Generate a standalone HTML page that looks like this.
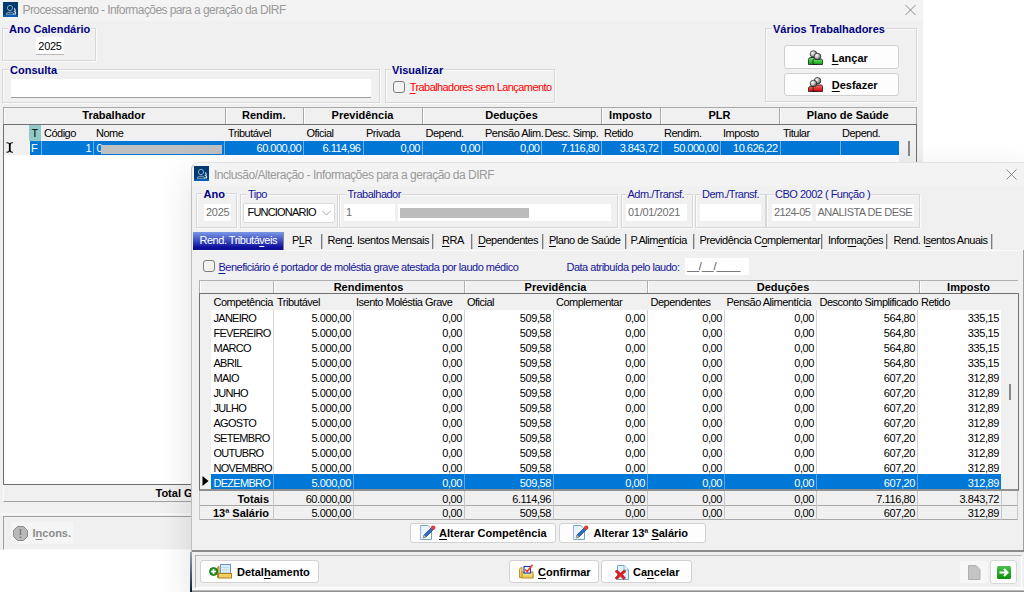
<!DOCTYPE html><html><head><meta charset="utf-8"><style>
html,body{margin:0;padding:0;width:1024px;height:592px;overflow:hidden;background:#fff;position:relative;font-family:"Liberation Sans",sans-serif;}
.a{position:absolute;white-space:nowrap;}
u{text-decoration:underline;text-underline-offset:1.5px;}
</style></head><body>
<div class="a" style="left:0px;top:0px;width:923px;height:550px;background:#f0f0f0;"></div>
<div class="a" style="left:0px;top:0px;width:923px;height:21px;background:#f3f3f3;"></div>
<div class="a" style="left:3px;top:2px;width:15px;height:15px;background:#0d3b66;"></div>
<div class="a" style="left:22.5px;top:3.83px;font-size:12px;font-weight:400;color:#9a9a9a;letter-spacing:-0.58px;line-height:12px;">Processamento - Informações para a geração da DIRF</div>
<svg class="a" style="left:904px;top:4px" width="13" height="12"><path d="M1.5 1 L11.5 11 M11.5 1 L1.5 11" stroke="#8a8a8a" stroke-width="1"/></svg>
<div class="a" style="left:2px;top:28px;width:94px;height:33px;box-sizing:border-box;border:1px solid #d8d8d8;box-shadow:inset 1px 1px 0 #fafafa, 1px 1px 0 #fafafa;"></div>
<div class="a" style="left:9px;top:23.86px;font-size:11px;font-weight:700;color:#000080;letter-spacing:0px;line-height:11px;background:#f0f0f0;padding:0 1px;margin-left:-1px;">Ano Calendário</div>
<div class="a" style="left:36px;top:37px;width:28px;height:18px;background:#fff;border-bottom:1px solid #b8b8b8;box-sizing:border-box;"></div>
<div class="a" style="left:30.0px;width:40px;text-align:center;top:40.86px;font-size:11px;font-weight:400;color:#000;letter-spacing:-0.3px;line-height:11px;">2025</div>
<div class="a" style="left:2px;top:69px;width:378px;height:34px;box-sizing:border-box;border:1px solid #d8d8d8;box-shadow:inset 1px 1px 0 #fafafa, 1px 1px 0 #fafafa;"></div>
<div class="a" style="left:10px;top:64.86px;font-size:11px;font-weight:700;color:#000080;letter-spacing:0px;line-height:11px;background:#f0f0f0;padding:0 1px;margin-left:-1px;">Consulta</div>
<div class="a" style="left:11px;top:79px;width:360px;height:19px;background:#fff;border-bottom:1px solid #a0a0a0;box-sizing:border-box;"></div>
<div class="a" style="left:385px;top:69px;width:170px;height:34px;box-sizing:border-box;border:1px solid #d8d8d8;box-shadow:inset 1px 1px 0 #fafafa, 1px 1px 0 #fafafa;"></div>
<div class="a" style="left:392px;top:64.86px;font-size:11px;font-weight:700;color:#000080;letter-spacing:0px;line-height:11px;background:#f0f0f0;padding:0 1px;margin-left:-1px;">Visualizar</div>
<div class="a" style="left:393px;top:81px;width:12px;height:12px;background:#f3f3f3;border:1px solid #7c7c7c;border-radius:3px;box-sizing:border-box;"></div>
<div class="a" style="left:409.75px;top:82.46px;font-size:11px;font-weight:400;color:#ff0000;letter-spacing:-0.58px;line-height:11px;"><u>T</u>rabalhadores sem Lançamento</div>
<div class="a" style="left:765px;top:28px;width:152px;height:74px;box-sizing:border-box;border:1px solid #d8d8d8;box-shadow:inset 1px 1px 0 #fafafa, 1px 1px 0 #fafafa;"></div>
<div class="a" style="left:773px;top:23.86px;font-size:11px;font-weight:700;color:#000080;letter-spacing:0px;line-height:11px;background:#f0f0f0;padding:0 1px;margin-left:-1px;">Vários Trabalhadores</div>
<div class="a" style="left:784px;top:45px;width:115px;height:24px;background:#fdfdfd;border:1px solid #d0d0d0;border-radius:3px;box-sizing:border-box;"></div>
<div class="a" style="left:784px;top:73px;width:115px;height:23px;background:#fdfdfd;border:1px solid #d0d0d0;border-radius:3px;box-sizing:border-box;"></div>
<svg class="a" style="left:808px;top:50px" width="15" height="15" viewBox="0 0 15 15"><defs><radialGradient id="hd" cx="0.35" cy="0.35" r="0.7"><stop offset="0" stop-color="#ffffff"/><stop offset="0.5" stop-color="#b8b8b8"/><stop offset="1" stop-color="#404040"/></radialGradient>
<linearGradient id="gb" x1="0" y1="0" x2="0" y2="1"><stop offset="0" stop-color="#6ee86e"/><stop offset="1" stop-color="#0a9a0a"/></linearGradient>
<linearGradient id="rb" x1="0" y1="0" x2="0" y2="1"><stop offset="0" stop-color="#ff6a6a"/><stop offset="1" stop-color="#c80000"/></linearGradient></defs><path d="M0.5 9.5 Q0.5 7.5 3 7.5 H9 V14.5 H0.5 Z" fill="url(#gb)" stroke="#1a1a1a" stroke-width="0.8"/><path d="M5 10.5 Q5 9 7 9 H13 Q14.5 9 14.5 10.5 V14.5 H5 Z" fill="url(#gb)" stroke="#1a1a1a" stroke-width="0.8"/><circle cx="5.5" cy="4" r="3.3" fill="url(#hd)" stroke="#222" stroke-width="0.7"/><circle cx="9.5" cy="6.5" r="3.3" fill="url(#hd)" stroke="#222" stroke-width="0.7"/></svg>
<svg class="a" style="left:808px;top:77px" width="15" height="15" viewBox="0 0 15 15"><path d="M0.5 11 Q0.5 9.5 2.5 9.5 H9 V14.5 H0.5 Z" fill="url(#rb)" stroke="#1a1a1a" stroke-width="0.8"/><path d="M5 9.5 Q5 8 7 8 H13 Q14.5 8 14.5 9.5 V14.5 H5 Z" fill="url(#rb)" stroke="#1a1a1a" stroke-width="0.8"/><circle cx="9.5" cy="3.8" r="3.3" fill="url(#hd)" stroke="#222" stroke-width="0.7"/><circle cx="5.5" cy="6.5" r="3.3" fill="url(#hd)" stroke="#222" stroke-width="0.7"/></svg>
<div class="a" style="left:831.75px;top:52.86px;font-size:11px;font-weight:700;color:#000;letter-spacing:0px;line-height:11px;"><u>L</u>ançar</div>
<div class="a" style="left:831.75px;top:79.86px;font-size:11px;font-weight:700;color:#000;letter-spacing:0px;line-height:11px;"><u>D</u>esfazer</div>
<div class="a" style="left:3px;top:107px;width:913.5px;height:17px;background:#f0f0f0;border-top:1px solid #a8a8a8;box-sizing:border-box;"></div>
<div class="a" style="left:3px;top:107px;width:1px;height:17px;background:#a8a8a8;"></div>
<div class="a" style="left:4px;top:108px;width:1px;height:16px;background:#fff;"></div>
<div class="a" style="left:13.75px;width:200px;text-align:center;top:110.36px;font-size:11px;font-weight:700;color:#000;letter-spacing:0px;line-height:11px;">Trabalhador</div>
<div class="a" style="left:224.5px;top:107px;width:1.0px;height:17px;background:#a8a8a8;"></div>
<div class="a" style="left:225.5px;top:108px;width:1.0px;height:16px;background:#fff;"></div>
<div class="a" style="left:163.75px;width:200px;text-align:center;top:110.36px;font-size:11px;font-weight:700;color:#000;letter-spacing:0px;line-height:11px;">Rendim.</div>
<div class="a" style="left:303px;top:107px;width:1px;height:17px;background:#a8a8a8;"></div>
<div class="a" style="left:304px;top:108px;width:1px;height:16px;background:#fff;"></div>
<div class="a" style="left:262.5px;width:200px;text-align:center;top:110.36px;font-size:11px;font-weight:700;color:#000;letter-spacing:0px;line-height:11px;">Previdência</div>
<div class="a" style="left:422px;top:107px;width:1px;height:17px;background:#a8a8a8;"></div>
<div class="a" style="left:423px;top:108px;width:1px;height:16px;background:#fff;"></div>
<div class="a" style="left:411.5px;width:200px;text-align:center;top:110.36px;font-size:11px;font-weight:700;color:#000;letter-spacing:0px;line-height:11px;">Deduções</div>
<div class="a" style="left:601px;top:107px;width:1px;height:17px;background:#a8a8a8;"></div>
<div class="a" style="left:602px;top:108px;width:1px;height:16px;background:#fff;"></div>
<div class="a" style="left:530.5px;width:200px;text-align:center;top:110.36px;font-size:11px;font-weight:700;color:#000;letter-spacing:0px;line-height:11px;">Imposto</div>
<div class="a" style="left:660px;top:107px;width:1px;height:17px;background:#a8a8a8;"></div>
<div class="a" style="left:661px;top:108px;width:1px;height:16px;background:#fff;"></div>
<div class="a" style="left:619.5px;width:200px;text-align:center;top:110.36px;font-size:11px;font-weight:700;color:#000;letter-spacing:0px;line-height:11px;">PLR</div>
<div class="a" style="left:779px;top:107px;width:1px;height:17px;background:#a8a8a8;"></div>
<div class="a" style="left:780px;top:108px;width:1px;height:16px;background:#fff;"></div>
<div class="a" style="left:747.75px;width:200px;text-align:center;top:110.36px;font-size:11px;font-weight:700;color:#000;letter-spacing:0px;line-height:11px;">Plano de Saúde</div>
<div class="a" style="left:915.5px;top:107px;width:1.0px;height:17px;background:#a8a8a8;"></div>
<div class="a" style="left:3px;top:124px;width:914px;height:361px;background:#fff;border:1px solid #6f6f6f;box-sizing:border-box;"></div>
<div class="a" style="left:4px;top:125px;width:894.5px;height:16px;background:#f0f0f0;"></div>
<div class="a" style="left:898.5px;top:125px;width:17.5px;height:359px;background:#f0f0f0;"></div>
<div class="a" style="left:29px;top:125px;width:12px;height:16px;background:#8fcac6;"></div>
<div class="a" style="left:31.5px;top:127.86px;font-size:11px;font-weight:400;color:#000;letter-spacing:-0.5px;line-height:11px;">T</div>
<div class="a" style="left:44px;top:127.86px;font-size:11px;font-weight:400;color:#000;letter-spacing:-0.5px;line-height:11px;">Código</div>
<div class="a" style="left:96px;top:127.86px;font-size:11px;font-weight:400;color:#000;letter-spacing:-0.5px;line-height:11px;">Nome</div>
<div class="a" style="left:228px;top:127.86px;font-size:11px;font-weight:400;color:#000;letter-spacing:-0.5px;line-height:11px;">Tributável</div>
<div class="a" style="left:306.5px;top:127.86px;font-size:11px;font-weight:400;color:#000;letter-spacing:-0.5px;line-height:11px;">Oficial</div>
<div class="a" style="left:366px;top:127.86px;font-size:11px;font-weight:400;color:#000;letter-spacing:-0.5px;line-height:11px;">Privada</div>
<div class="a" style="left:425.5px;top:127.86px;font-size:11px;font-weight:400;color:#000;letter-spacing:-0.5px;line-height:11px;">Depend.</div>
<div class="a" style="left:485px;top:127.86px;font-size:11px;font-weight:400;color:#000;letter-spacing:-0.5px;line-height:11px;">Pensão Alim.</div>
<div class="a" style="left:544.5px;top:127.86px;font-size:11px;font-weight:400;color:#000;letter-spacing:-0.5px;line-height:11px;">Desc. Simp.</div>
<div class="a" style="left:604px;top:127.86px;font-size:11px;font-weight:400;color:#000;letter-spacing:-0.5px;line-height:11px;">Retido</div>
<div class="a" style="left:664px;top:127.86px;font-size:11px;font-weight:400;color:#000;letter-spacing:-0.5px;line-height:11px;">Rendim.</div>
<div class="a" style="left:723px;top:127.86px;font-size:11px;font-weight:400;color:#000;letter-spacing:-0.5px;line-height:11px;">Imposto</div>
<div class="a" style="left:783px;top:127.86px;font-size:11px;font-weight:400;color:#000;letter-spacing:-0.5px;line-height:11px;">Titular</div>
<div class="a" style="left:842px;top:127.86px;font-size:11px;font-weight:400;color:#000;letter-spacing:-0.5px;line-height:11px;">Depend.</div>
<div class="a" style="left:29.5px;top:141px;width:869.0px;height:14px;background:#0078d7;"></div>
<div class="a" style="left:41px;top:141px;width:1px;height:14px;background:#6fb1e8;"></div>
<div class="a" style="left:93px;top:141px;width:1px;height:14px;background:#6fb1e8;"></div>
<div class="a" style="left:224px;top:141px;width:1px;height:14px;background:#6fb1e8;"></div>
<div class="a" style="left:303px;top:141px;width:1px;height:14px;background:#6fb1e8;"></div>
<div class="a" style="left:362.5px;top:141px;width:1.0px;height:14px;background:#6fb1e8;"></div>
<div class="a" style="left:422px;top:141px;width:1px;height:14px;background:#6fb1e8;"></div>
<div class="a" style="left:481.5px;top:141px;width:1.0px;height:14px;background:#6fb1e8;"></div>
<div class="a" style="left:541px;top:141px;width:1px;height:14px;background:#6fb1e8;"></div>
<div class="a" style="left:600.5px;top:141px;width:1.0px;height:14px;background:#6fb1e8;"></div>
<div class="a" style="left:660.5px;top:141px;width:1.0px;height:14px;background:#6fb1e8;"></div>
<div class="a" style="left:719.5px;top:141px;width:1.0px;height:14px;background:#6fb1e8;"></div>
<div class="a" style="left:779.5px;top:141px;width:1.0px;height:14px;background:#6fb1e8;"></div>
<div class="a" style="left:839.5px;top:141px;width:1.0px;height:14px;background:#6fb1e8;"></div>
<div class="a" style="left:31px;top:143.16px;font-size:11px;font-weight:400;color:#fff;letter-spacing:-0.5px;line-height:11px;">F</div>
<div class="a" style="left:51px;width:40px;text-align:right;top:143.16px;font-size:11px;font-weight:400;color:#fff;letter-spacing:-0.5px;line-height:11px;">1</div>
<div class="a" style="left:96.5px;top:143.16px;font-size:11px;font-weight:400;color:#fff;letter-spacing:-0.5px;line-height:11px;">0</div>
<div class="a" style="left:100.5px;top:144.5px;width:121.5px;height:9.0px;background:#c0c0c0;"></div>
<div class="a" style="left:221px;width:80px;text-align:right;top:143.16px;font-size:11px;font-weight:400;color:#fff;letter-spacing:-0.5px;line-height:11px;">60.000,00</div>
<div class="a" style="left:280.5px;width:80px;text-align:right;top:143.16px;font-size:11px;font-weight:400;color:#fff;letter-spacing:-0.5px;line-height:11px;">6.114,96</div>
<div class="a" style="left:340px;width:80px;text-align:right;top:143.16px;font-size:11px;font-weight:400;color:#fff;letter-spacing:-0.5px;line-height:11px;">0,00</div>
<div class="a" style="left:400px;width:80px;text-align:right;top:143.16px;font-size:11px;font-weight:400;color:#fff;letter-spacing:-0.5px;line-height:11px;">0,00</div>
<div class="a" style="left:459.5px;width:80px;text-align:right;top:143.16px;font-size:11px;font-weight:400;color:#fff;letter-spacing:-0.5px;line-height:11px;">0,00</div>
<div class="a" style="left:519px;width:80px;text-align:right;top:143.16px;font-size:11px;font-weight:400;color:#fff;letter-spacing:-0.5px;line-height:11px;">7.116,80</div>
<div class="a" style="left:578.5px;width:80px;text-align:right;top:143.16px;font-size:11px;font-weight:400;color:#fff;letter-spacing:-0.5px;line-height:11px;">3.843,72</div>
<div class="a" style="left:638px;width:80px;text-align:right;top:143.16px;font-size:11px;font-weight:400;color:#fff;letter-spacing:-0.5px;line-height:11px;">50.000,00</div>
<div class="a" style="left:697.5px;width:80px;text-align:right;top:143.16px;font-size:11px;font-weight:400;color:#fff;letter-spacing:-0.5px;line-height:11px;">10.626,22</div>
<div class="a" style="left:4px;top:141px;width:25px;height:14px;background:#f0f0f0;"></div>
<svg class="a" style="left:4px;top:141px" width="11" height="13"><path d="M2.5 1.8 Q5 1.5 5.8 3.5 Q6.5 1.5 8.8 1.8 M2.5 11.2 Q5 11.5 5.8 9.5 Q6.5 11.5 8.8 11.2" stroke="#000" stroke-width="1.2" fill="none"/><path d="M5.8 3 V10" stroke="#000" stroke-width="1.8"/></svg>
<div class="a" style="left:907.5px;top:141px;width:2.0px;height:15px;background:#888;"></div>
<div class="a" style="left:3px;top:485px;width:914px;height:17px;background:#f0f0f0;border-bottom:1px solid #a0a0a0;border-left:1px solid #fafafa;box-sizing:border-box;"></div>
<div class="a" style="left:155.5px;top:487.86px;font-size:11px;font-weight:700;color:#000;letter-spacing:0px;line-height:11px;">Total Geral</div>
<div class="a" style="left:0px;top:513px;width:923px;height:2px;background:#f8f8f8;"></div>
<div class="a" style="left:3px;top:516px;width:920px;height:34px;border-top:1px solid #a0a0a0;border-left:1px solid #a0a0a0;border-bottom:1px solid #fafafa;box-sizing:border-box;"></div>
<div class="a" style="left:10.5px;top:522px;width:62.5px;height:21.5px;background:#f5f5f5;border-radius:3px;"></div>
<svg class="a" style="left:13px;top:526px" width="15" height="15" viewBox="0 0 15 15"><path d="M4.5 0.5 H10.5 L14.5 4.5 V10.5 L10.5 14.5 H4.5 L0.5 10.5 V4.5 Z" fill="#b8b8b8" stroke="#8a8a8a" stroke-width="1"/><path d="M7.5 3 V9 M7.5 10.5 V12" stroke="#7a7a7a" stroke-width="1.5"/></svg>
<div class="a" style="left:32.5px;top:527.86px;font-size:11px;font-weight:700;color:#8c8c8c;letter-spacing:0px;line-height:11px;">I<u>n</u>cons.</div>
<div class="a" style="left:191px;top:162px;width:839px;height:438px;background:#f0f0f0;border:1px solid #c0c0c0;border-top-color:#e4e4e4;border-radius:8px 8px 0 0;box-sizing:border-box;box-shadow:0 12px 36px rgba(0,0,0,0.12);"></div>
<div class="a" style="left:192px;top:163px;width:837px;height:23px;background:#f3f3f3;border-radius:7px 7px 0 0;"></div>
<svg class="a" style="left:194px;top:166px" width="15" height="15"><rect width="15" height="15" fill="#003a70"/><rect y="13" width="15" height="2" fill="#0a5db5"/><path d="M11 6.5 C12.5 7 12.5 9 11.5 9.5 C12.5 10 13 11 12.5 12 H10" fill="none" stroke="#d8e4f0" stroke-width="1.1"/><circle cx="7" cy="6" r="2.6" fill="none" stroke="#9fb4c8" stroke-width="0.9"/><path d="M3 12.2 C3.5 9.5 10.5 9.5 11 12.2 Z" fill="none" stroke="#9fb4c8" stroke-width="0.9"/></svg>
<svg class="a" style="left:3px;top:2px" width="15" height="15"><rect width="15" height="15" fill="#003a70"/><rect y="13" width="15" height="2" fill="#0a5db5"/><path d="M11 6.5 C12.5 7 12.5 9 11.5 9.5 C12.5 10 13 11 12.5 12 H10" fill="none" stroke="#d8e4f0" stroke-width="1.1"/><circle cx="7" cy="6" r="2.6" fill="none" stroke="#9fb4c8" stroke-width="0.9"/><path d="M3 12.2 C3.5 9.5 10.5 9.5 11 12.2 Z" fill="none" stroke="#9fb4c8" stroke-width="0.9"/></svg>
<div class="a" style="left:214px;top:169.33px;font-size:12px;font-weight:400;color:#9a9a9a;letter-spacing:-0.5px;line-height:12px;">Inclusão/Alteração - Informações para a geração da DIRF</div>
<svg class="a" style="left:1005px;top:168px" width="13" height="13"><path d="M1.5 1.5 L11.5 11.5 M11.5 1.5 L1.5 11.5" stroke="#8a8a8a" stroke-width="1"/></svg>
<div class="a" style="left:196px;top:193px;width:41px;height:35px;box-sizing:border-box;border:1px solid #d8d8d8;box-shadow:inset 1px 1px 0 #fafafa, 1px 1px 0 #fafafa;"></div>
<div class="a" style="left:203.5px;top:188.86px;font-size:11px;font-weight:700;color:#000080;letter-spacing:0px;line-height:11px;background:#f0f0f0;padding:0 1px;margin-left:-1px;">Ano</div>
<div class="a" style="left:204px;top:204px;width:27px;height:17px;background:#fff;"></div>
<div class="a" style="left:206px;top:207.36px;font-size:11px;font-weight:400;color:#6d6d6d;letter-spacing:-0.3px;line-height:11px;">2025</div>
<div class="a" style="left:240px;top:194px;width:98px;height:34px;box-sizing:border-box;border:1px solid #d8d8d8;box-shadow:inset 1px 1px 0 #fafafa, 1px 1px 0 #fafafa;"></div>
<div class="a" style="left:248px;top:188.86px;font-size:11px;font-weight:400;color:#16169a;letter-spacing:-0.5px;line-height:11px;background:#f0f0f0;padding:0 1px;margin-left:-1px;">Tipo</div>
<div class="a" style="left:243px;top:203px;width:92px;height:20px;background:#fff;border:1px solid #dadada;border-radius:2px;box-sizing:border-box;"></div>
<div class="a" style="left:247.5px;top:207.36px;font-size:11px;font-weight:400;color:#000;letter-spacing:-0.8px;line-height:11px;">FUNCIONARIO</div>
<svg class="a" style="left:322px;top:210px" width="9" height="7"><path d="M0.5 1 L4.5 5 L8.5 1" stroke="#a8a8a8" stroke-width="1" fill="none"/></svg>
<div class="a" style="left:339px;top:194px;width:279px;height:34px;box-sizing:border-box;border:1px solid #d8d8d8;box-shadow:inset 1px 1px 0 #fafafa, 1px 1px 0 #fafafa;"></div>
<div class="a" style="left:347.5px;top:188.86px;font-size:11px;font-weight:400;color:#16169a;letter-spacing:-0.5px;line-height:11px;background:#f0f0f0;padding:0 1px;margin-left:-1px;">Trabalhador</div>
<div class="a" style="left:344px;top:204px;width:51px;height:17px;background:#fff;"></div>
<div class="a" style="left:346px;top:207.36px;font-size:11px;font-weight:400;color:#6d6d6d;letter-spacing:-0.5px;line-height:11px;">1</div>
<div class="a" style="left:398px;top:204px;width:213px;height:17px;background:#fff;"></div>
<div class="a" style="left:400px;top:208px;width:129px;height:10px;background:#bcbcbc;"></div>
<div class="a" style="left:621px;top:194px;width:72px;height:34px;box-sizing:border-box;border:1px solid #d8d8d8;box-shadow:inset 1px 1px 0 #fafafa, 1px 1px 0 #fafafa;"></div>
<div class="a" style="left:627.5px;top:188.86px;font-size:11px;font-weight:400;color:#16169a;letter-spacing:-0.5px;line-height:11px;background:#f0f0f0;padding:0 1px;margin-left:-1px;">Adm./Transf.</div>
<div class="a" style="left:626px;top:204px;width:61px;height:17px;background:#fff;"></div>
<div class="a" style="left:628px;top:207.36px;font-size:11px;font-weight:400;color:#6d6d6d;letter-spacing:-0.3px;line-height:11px;">01/01/2021</div>
<div class="a" style="left:695px;top:194px;width:71px;height:34px;box-sizing:border-box;border:1px solid #d8d8d8;box-shadow:inset 1px 1px 0 #fafafa, 1px 1px 0 #fafafa;"></div>
<div class="a" style="left:702px;top:188.86px;font-size:11px;font-weight:400;color:#16169a;letter-spacing:-0.5px;line-height:11px;background:#f0f0f0;padding:0 1px;margin-left:-1px;">Dem./Transf.</div>
<div class="a" style="left:700px;top:204px;width:61px;height:17px;background:#fff;"></div>
<div class="a" style="left:766px;top:194px;width:154px;height:34px;box-sizing:border-box;border:1px solid #d8d8d8;box-shadow:inset 1px 1px 0 #fafafa, 1px 1px 0 #fafafa;"></div>
<div class="a" style="left:775px;top:188.86px;font-size:11px;font-weight:400;color:#16169a;letter-spacing:-0.5px;line-height:11px;background:#f0f0f0;padding:0 1px;margin-left:-1px;">CBO 2002 ( Função )</div>
<div class="a" style="left:772px;top:204px;width:40px;height:17px;background:#fff;"></div>
<div class="a" style="left:774px;top:207.36px;font-size:11px;font-weight:400;color:#6d6d6d;letter-spacing:-0.6px;line-height:11px;">2124-05</div>
<div class="a" style="left:816px;top:204px;width:98px;height:17px;background:#fff;"></div>
<div class="a" style="left:817.5px;top:207.36px;font-size:11px;font-weight:400;color:#6d6d6d;letter-spacing:-0.53px;line-height:11px;">ANALISTA DE DESE</div>
<div class="a" style="left:193px;top:232px;width:91px;height:19px;background:linear-gradient(to bottom,#7a98e6 0%,#3d4fc0 45%,#1010a0 80%,#0a0a8a 100%);"></div>
<div class="a" style="left:283px;top:233px;width:1px;height:17px;background:#8a8a8a;"></div>
<div class="a" style="left:199.5px;top:235.36px;font-size:11px;font-weight:400;color:#fff;letter-spacing:-0.48px;line-height:11px;">Rend. Tributá<u>v</u>eis</div>
<div class="a" style="left:292px;top:235.36px;font-size:11px;font-weight:400;color:#000;letter-spacing:-0.5px;line-height:11px;">P<u>L</u>R</div>
<div class="a" style="left:320.5px;top:234px;width:1.0px;height:15px;background:#7a7a7a;"></div>
<div class="a" style="left:321.5px;top:234px;width:1.0px;height:15px;background:#c8c8c8;"></div>
<div class="a" style="left:327.5px;top:235.36px;font-size:11px;font-weight:400;color:#000;letter-spacing:-0.5px;line-height:11px;">Ren<u>d</u>. Isentos Mensais</div>
<div class="a" style="left:432px;top:234px;width:1px;height:15px;background:#7a7a7a;"></div>
<div class="a" style="left:433px;top:234px;width:1px;height:15px;background:#c8c8c8;"></div>
<div class="a" style="left:442px;top:235.36px;font-size:11px;font-weight:400;color:#000;letter-spacing:-0.5px;line-height:11px;"><u>R</u>RA</div>
<div class="a" style="left:471px;top:234px;width:1px;height:15px;background:#7a7a7a;"></div>
<div class="a" style="left:472px;top:234px;width:1px;height:15px;background:#c8c8c8;"></div>
<div class="a" style="left:478px;top:235.36px;font-size:11px;font-weight:400;color:#000;letter-spacing:-0.5px;line-height:11px;"><u>D</u>ependentes</div>
<div class="a" style="left:542px;top:234px;width:1px;height:15px;background:#7a7a7a;"></div>
<div class="a" style="left:543px;top:234px;width:1px;height:15px;background:#c8c8c8;"></div>
<div class="a" style="left:549px;top:235.36px;font-size:11px;font-weight:400;color:#000;letter-spacing:-0.5px;line-height:11px;"><u>P</u>lano de Saúde</div>
<div class="a" style="left:624.5px;top:234px;width:1.0px;height:15px;background:#7a7a7a;"></div>
<div class="a" style="left:625.5px;top:234px;width:1.0px;height:15px;background:#c8c8c8;"></div>
<div class="a" style="left:630.5px;top:235.36px;font-size:11px;font-weight:400;color:#000;letter-spacing:-0.5px;line-height:11px;">P.Alim<u>e</u>ntícia</div>
<div class="a" style="left:692.5px;top:234px;width:1.0px;height:15px;background:#7a7a7a;"></div>
<div class="a" style="left:693.5px;top:234px;width:1.0px;height:15px;background:#c8c8c8;"></div>
<div class="a" style="left:699.5px;top:235.36px;font-size:11px;font-weight:400;color:#000;letter-spacing:-0.5px;line-height:11px;">Previdência C<u>o</u>mplementar</div>
<div class="a" style="left:821px;top:234px;width:1px;height:15px;background:#7a7a7a;"></div>
<div class="a" style="left:822px;top:234px;width:1px;height:15px;background:#c8c8c8;"></div>
<div class="a" style="left:828px;top:235.36px;font-size:11px;font-weight:400;color:#000;letter-spacing:-0.5px;line-height:11px;">Infor<u>m</u>ações</div>
<div class="a" style="left:886px;top:234px;width:1px;height:15px;background:#7a7a7a;"></div>
<div class="a" style="left:887px;top:234px;width:1px;height:15px;background:#c8c8c8;"></div>
<div class="a" style="left:893.5px;top:235.36px;font-size:11px;font-weight:400;color:#000;letter-spacing:-0.5px;line-height:11px;">Rend. I<u>s</u>entos Anuais</div>
<div class="a" style="left:991px;top:234px;width:1px;height:15px;background:#7a7a7a;"></div>
<div class="a" style="left:992px;top:234px;width:1px;height:15px;background:#c8c8c8;"></div>
<div class="a" style="left:193px;top:250px;width:831px;height:1px;background:#fafafa;"></div>
<div class="a" style="left:1023px;top:250px;width:1px;height:300px;background:#a0a0a0;"></div>
<div class="a" style="left:203px;top:260px;width:12px;height:12px;background:#f3f3f3;border:1px solid #7c7c7c;border-radius:3px;box-sizing:border-box;"></div>
<div class="a" style="left:218.5px;top:261.86px;font-size:11px;font-weight:400;color:#16169a;letter-spacing:-0.5px;line-height:11px;"><u>B</u>eneficiário é portador de moléstia grave atestada por laudo médico</div>
<div class="a" style="left:566.5px;top:261.86px;font-size:11px;font-weight:400;color:#16169a;letter-spacing:-0.5px;line-height:11px;">Data atribuída pelo laudo:</div>
<div class="a" style="left:685px;top:258px;width:64px;height:17px;background:#fff;"></div>
<div class="a" style="left:687px;top:261.36px;font-size:11px;font-weight:400;color:#555;letter-spacing:-0.2px;line-height:11px;">__/__/____</div>
<div class="a" style="left:199px;top:280px;width:819px;height:13px;background:#f0f0f0;border-top:1px solid #b0b0b0;box-sizing:border-box;"></div>
<div class="a" style="left:199px;top:280px;width:1px;height:13px;background:#b0b0b0;"></div>
<div class="a" style="left:200px;top:281px;width:1px;height:12px;background:#fff;"></div>
<div class="a" style="left:273px;top:280px;width:1px;height:13px;background:#b0b0b0;"></div>
<div class="a" style="left:274px;top:281px;width:1px;height:12px;background:#fff;"></div>
<div class="a" style="left:268.5px;width:200px;text-align:center;top:282.36px;font-size:11px;font-weight:700;color:#000;letter-spacing:0px;line-height:11px;">Rendimentos</div>
<div class="a" style="left:464px;top:280px;width:1px;height:13px;background:#b0b0b0;"></div>
<div class="a" style="left:465px;top:281px;width:1px;height:12px;background:#fff;"></div>
<div class="a" style="left:455.5px;width:200px;text-align:center;top:282.36px;font-size:11px;font-weight:700;color:#000;letter-spacing:0px;line-height:11px;">Previdência</div>
<div class="a" style="left:647px;top:280px;width:1px;height:13px;background:#b0b0b0;"></div>
<div class="a" style="left:648px;top:281px;width:1px;height:12px;background:#fff;"></div>
<div class="a" style="left:683.0px;width:200px;text-align:center;top:282.36px;font-size:11px;font-weight:700;color:#000;letter-spacing:0px;line-height:11px;">Deduções</div>
<div class="a" style="left:919px;top:280px;width:1px;height:13px;background:#b0b0b0;"></div>
<div class="a" style="left:920px;top:281px;width:1px;height:12px;background:#fff;"></div>
<div class="a" style="left:868.5px;width:200px;text-align:center;top:282.36px;font-size:11px;font-weight:700;color:#000;letter-spacing:0px;line-height:11px;">Imposto</div>
<div class="a" style="left:199px;top:293px;width:820px;height:198px;background:#fff;border:1px solid #707070;border-bottom:2px solid #909090;box-sizing:border-box;"></div>
<div class="a" style="left:200px;top:294px;width:818px;height:16px;background:#f0f0f0;"></div>
<div class="a" style="left:200px;top:310px;width:11px;height:179px;background:#f0f0f0;"></div>
<div class="a" style="left:1001px;top:310px;width:17px;height:179px;background:#f0f0f0;"></div>
<div class="a" style="left:1009px;top:384px;width:2px;height:16px;background:#888;"></div>
<div class="a" style="left:213.5px;top:296.86px;font-size:11px;font-weight:400;color:#000;letter-spacing:-0.5px;line-height:11px;">Competência</div>
<div class="a" style="left:277px;top:296.86px;font-size:11px;font-weight:400;color:#000;letter-spacing:-0.5px;line-height:11px;">Tributável</div>
<div class="a" style="left:356px;top:296.86px;font-size:11px;font-weight:400;color:#000;letter-spacing:-0.5px;line-height:11px;">Isento Moléstia Grave</div>
<div class="a" style="left:467px;top:296.86px;font-size:11px;font-weight:400;color:#000;letter-spacing:-0.5px;line-height:11px;">Oficial</div>
<div class="a" style="left:556px;top:296.86px;font-size:11px;font-weight:400;color:#000;letter-spacing:-0.5px;line-height:11px;">Complementar</div>
<div class="a" style="left:650.5px;top:296.86px;font-size:11px;font-weight:400;color:#000;letter-spacing:-0.5px;line-height:11px;">Dependentes</div>
<div class="a" style="left:726.5px;top:296.86px;font-size:11px;font-weight:400;color:#000;letter-spacing:-0.5px;line-height:11px;">Pensão Alimentícia</div>
<div class="a" style="left:819.5px;top:296.86px;font-size:11px;font-weight:400;color:#000;letter-spacing:-0.5px;line-height:11px;">Desconto Simplificado</div>
<div class="a" style="left:921px;top:296.86px;font-size:11px;font-weight:400;color:#000;letter-spacing:-0.5px;line-height:11px;">Retido</div>
<div class="a" style="left:273px;top:310px;width:1px;height:179px;background:#d4d4d4;"></div>
<div class="a" style="left:353px;top:310px;width:1px;height:179px;background:#d4d4d4;"></div>
<div class="a" style="left:464px;top:310px;width:1px;height:179px;background:#d4d4d4;"></div>
<div class="a" style="left:553px;top:310px;width:1px;height:179px;background:#d4d4d4;"></div>
<div class="a" style="left:647px;top:310px;width:1px;height:179px;background:#d4d4d4;"></div>
<div class="a" style="left:724px;top:310px;width:1px;height:179px;background:#d4d4d4;"></div>
<div class="a" style="left:816px;top:310px;width:1px;height:179px;background:#d4d4d4;"></div>
<div class="a" style="left:917px;top:310px;width:1px;height:179px;background:#d4d4d4;"></div>
<div class="a" style="left:213.5px;top:312.56px;font-size:11px;font-weight:400;color:#000;letter-spacing:-0.72px;line-height:11px;">JANEIRO</div>
<div class="a" style="left:261px;width:90px;text-align:right;top:312.56px;font-size:11px;font-weight:400;color:#000;letter-spacing:-0.4px;line-height:11px;">5.000,00</div>
<div class="a" style="left:372px;width:90px;text-align:right;top:312.56px;font-size:11px;font-weight:400;color:#000;letter-spacing:-0.4px;line-height:11px;">0,00</div>
<div class="a" style="left:461px;width:90px;text-align:right;top:312.56px;font-size:11px;font-weight:400;color:#000;letter-spacing:-0.4px;line-height:11px;">509,58</div>
<div class="a" style="left:555px;width:90px;text-align:right;top:312.56px;font-size:11px;font-weight:400;color:#000;letter-spacing:-0.4px;line-height:11px;">0,00</div>
<div class="a" style="left:632px;width:90px;text-align:right;top:312.56px;font-size:11px;font-weight:400;color:#000;letter-spacing:-0.4px;line-height:11px;">0,00</div>
<div class="a" style="left:724px;width:90px;text-align:right;top:312.56px;font-size:11px;font-weight:400;color:#000;letter-spacing:-0.4px;line-height:11px;">0,00</div>
<div class="a" style="left:825px;width:90px;text-align:right;top:312.56px;font-size:11px;font-weight:400;color:#000;letter-spacing:-0.4px;line-height:11px;">564,80</div>
<div class="a" style="left:909px;width:90px;text-align:right;top:312.56px;font-size:11px;font-weight:400;color:#000;letter-spacing:-0.4px;line-height:11px;">335,15</div>
<div class="a" style="left:213.5px;top:327.56px;font-size:11px;font-weight:400;color:#000;letter-spacing:-0.72px;line-height:11px;">FEVEREIRO</div>
<div class="a" style="left:261px;width:90px;text-align:right;top:327.56px;font-size:11px;font-weight:400;color:#000;letter-spacing:-0.4px;line-height:11px;">5.000,00</div>
<div class="a" style="left:372px;width:90px;text-align:right;top:327.56px;font-size:11px;font-weight:400;color:#000;letter-spacing:-0.4px;line-height:11px;">0,00</div>
<div class="a" style="left:461px;width:90px;text-align:right;top:327.56px;font-size:11px;font-weight:400;color:#000;letter-spacing:-0.4px;line-height:11px;">509,58</div>
<div class="a" style="left:555px;width:90px;text-align:right;top:327.56px;font-size:11px;font-weight:400;color:#000;letter-spacing:-0.4px;line-height:11px;">0,00</div>
<div class="a" style="left:632px;width:90px;text-align:right;top:327.56px;font-size:11px;font-weight:400;color:#000;letter-spacing:-0.4px;line-height:11px;">0,00</div>
<div class="a" style="left:724px;width:90px;text-align:right;top:327.56px;font-size:11px;font-weight:400;color:#000;letter-spacing:-0.4px;line-height:11px;">0,00</div>
<div class="a" style="left:825px;width:90px;text-align:right;top:327.56px;font-size:11px;font-weight:400;color:#000;letter-spacing:-0.4px;line-height:11px;">564,80</div>
<div class="a" style="left:909px;width:90px;text-align:right;top:327.56px;font-size:11px;font-weight:400;color:#000;letter-spacing:-0.4px;line-height:11px;">335,15</div>
<div class="a" style="left:213.5px;top:342.56px;font-size:11px;font-weight:400;color:#000;letter-spacing:-0.72px;line-height:11px;">MARCO</div>
<div class="a" style="left:261px;width:90px;text-align:right;top:342.56px;font-size:11px;font-weight:400;color:#000;letter-spacing:-0.4px;line-height:11px;">5.000,00</div>
<div class="a" style="left:372px;width:90px;text-align:right;top:342.56px;font-size:11px;font-weight:400;color:#000;letter-spacing:-0.4px;line-height:11px;">0,00</div>
<div class="a" style="left:461px;width:90px;text-align:right;top:342.56px;font-size:11px;font-weight:400;color:#000;letter-spacing:-0.4px;line-height:11px;">509,58</div>
<div class="a" style="left:555px;width:90px;text-align:right;top:342.56px;font-size:11px;font-weight:400;color:#000;letter-spacing:-0.4px;line-height:11px;">0,00</div>
<div class="a" style="left:632px;width:90px;text-align:right;top:342.56px;font-size:11px;font-weight:400;color:#000;letter-spacing:-0.4px;line-height:11px;">0,00</div>
<div class="a" style="left:724px;width:90px;text-align:right;top:342.56px;font-size:11px;font-weight:400;color:#000;letter-spacing:-0.4px;line-height:11px;">0,00</div>
<div class="a" style="left:825px;width:90px;text-align:right;top:342.56px;font-size:11px;font-weight:400;color:#000;letter-spacing:-0.4px;line-height:11px;">564,80</div>
<div class="a" style="left:909px;width:90px;text-align:right;top:342.56px;font-size:11px;font-weight:400;color:#000;letter-spacing:-0.4px;line-height:11px;">335,15</div>
<div class="a" style="left:213.5px;top:357.56px;font-size:11px;font-weight:400;color:#000;letter-spacing:-0.72px;line-height:11px;">ABRIL</div>
<div class="a" style="left:261px;width:90px;text-align:right;top:357.56px;font-size:11px;font-weight:400;color:#000;letter-spacing:-0.4px;line-height:11px;">5.000,00</div>
<div class="a" style="left:372px;width:90px;text-align:right;top:357.56px;font-size:11px;font-weight:400;color:#000;letter-spacing:-0.4px;line-height:11px;">0,00</div>
<div class="a" style="left:461px;width:90px;text-align:right;top:357.56px;font-size:11px;font-weight:400;color:#000;letter-spacing:-0.4px;line-height:11px;">509,58</div>
<div class="a" style="left:555px;width:90px;text-align:right;top:357.56px;font-size:11px;font-weight:400;color:#000;letter-spacing:-0.4px;line-height:11px;">0,00</div>
<div class="a" style="left:632px;width:90px;text-align:right;top:357.56px;font-size:11px;font-weight:400;color:#000;letter-spacing:-0.4px;line-height:11px;">0,00</div>
<div class="a" style="left:724px;width:90px;text-align:right;top:357.56px;font-size:11px;font-weight:400;color:#000;letter-spacing:-0.4px;line-height:11px;">0,00</div>
<div class="a" style="left:825px;width:90px;text-align:right;top:357.56px;font-size:11px;font-weight:400;color:#000;letter-spacing:-0.4px;line-height:11px;">564,80</div>
<div class="a" style="left:909px;width:90px;text-align:right;top:357.56px;font-size:11px;font-weight:400;color:#000;letter-spacing:-0.4px;line-height:11px;">335,15</div>
<div class="a" style="left:213.5px;top:372.56px;font-size:11px;font-weight:400;color:#000;letter-spacing:-0.72px;line-height:11px;">MAIO</div>
<div class="a" style="left:261px;width:90px;text-align:right;top:372.56px;font-size:11px;font-weight:400;color:#000;letter-spacing:-0.4px;line-height:11px;">5.000,00</div>
<div class="a" style="left:372px;width:90px;text-align:right;top:372.56px;font-size:11px;font-weight:400;color:#000;letter-spacing:-0.4px;line-height:11px;">0,00</div>
<div class="a" style="left:461px;width:90px;text-align:right;top:372.56px;font-size:11px;font-weight:400;color:#000;letter-spacing:-0.4px;line-height:11px;">509,58</div>
<div class="a" style="left:555px;width:90px;text-align:right;top:372.56px;font-size:11px;font-weight:400;color:#000;letter-spacing:-0.4px;line-height:11px;">0,00</div>
<div class="a" style="left:632px;width:90px;text-align:right;top:372.56px;font-size:11px;font-weight:400;color:#000;letter-spacing:-0.4px;line-height:11px;">0,00</div>
<div class="a" style="left:724px;width:90px;text-align:right;top:372.56px;font-size:11px;font-weight:400;color:#000;letter-spacing:-0.4px;line-height:11px;">0,00</div>
<div class="a" style="left:825px;width:90px;text-align:right;top:372.56px;font-size:11px;font-weight:400;color:#000;letter-spacing:-0.4px;line-height:11px;">607,20</div>
<div class="a" style="left:909px;width:90px;text-align:right;top:372.56px;font-size:11px;font-weight:400;color:#000;letter-spacing:-0.4px;line-height:11px;">312,89</div>
<div class="a" style="left:213.5px;top:387.56px;font-size:11px;font-weight:400;color:#000;letter-spacing:-0.72px;line-height:11px;">JUNHO</div>
<div class="a" style="left:261px;width:90px;text-align:right;top:387.56px;font-size:11px;font-weight:400;color:#000;letter-spacing:-0.4px;line-height:11px;">5.000,00</div>
<div class="a" style="left:372px;width:90px;text-align:right;top:387.56px;font-size:11px;font-weight:400;color:#000;letter-spacing:-0.4px;line-height:11px;">0,00</div>
<div class="a" style="left:461px;width:90px;text-align:right;top:387.56px;font-size:11px;font-weight:400;color:#000;letter-spacing:-0.4px;line-height:11px;">509,58</div>
<div class="a" style="left:555px;width:90px;text-align:right;top:387.56px;font-size:11px;font-weight:400;color:#000;letter-spacing:-0.4px;line-height:11px;">0,00</div>
<div class="a" style="left:632px;width:90px;text-align:right;top:387.56px;font-size:11px;font-weight:400;color:#000;letter-spacing:-0.4px;line-height:11px;">0,00</div>
<div class="a" style="left:724px;width:90px;text-align:right;top:387.56px;font-size:11px;font-weight:400;color:#000;letter-spacing:-0.4px;line-height:11px;">0,00</div>
<div class="a" style="left:825px;width:90px;text-align:right;top:387.56px;font-size:11px;font-weight:400;color:#000;letter-spacing:-0.4px;line-height:11px;">607,20</div>
<div class="a" style="left:909px;width:90px;text-align:right;top:387.56px;font-size:11px;font-weight:400;color:#000;letter-spacing:-0.4px;line-height:11px;">312,89</div>
<div class="a" style="left:213.5px;top:402.56px;font-size:11px;font-weight:400;color:#000;letter-spacing:-0.72px;line-height:11px;">JULHO</div>
<div class="a" style="left:261px;width:90px;text-align:right;top:402.56px;font-size:11px;font-weight:400;color:#000;letter-spacing:-0.4px;line-height:11px;">5.000,00</div>
<div class="a" style="left:372px;width:90px;text-align:right;top:402.56px;font-size:11px;font-weight:400;color:#000;letter-spacing:-0.4px;line-height:11px;">0,00</div>
<div class="a" style="left:461px;width:90px;text-align:right;top:402.56px;font-size:11px;font-weight:400;color:#000;letter-spacing:-0.4px;line-height:11px;">509,58</div>
<div class="a" style="left:555px;width:90px;text-align:right;top:402.56px;font-size:11px;font-weight:400;color:#000;letter-spacing:-0.4px;line-height:11px;">0,00</div>
<div class="a" style="left:632px;width:90px;text-align:right;top:402.56px;font-size:11px;font-weight:400;color:#000;letter-spacing:-0.4px;line-height:11px;">0,00</div>
<div class="a" style="left:724px;width:90px;text-align:right;top:402.56px;font-size:11px;font-weight:400;color:#000;letter-spacing:-0.4px;line-height:11px;">0,00</div>
<div class="a" style="left:825px;width:90px;text-align:right;top:402.56px;font-size:11px;font-weight:400;color:#000;letter-spacing:-0.4px;line-height:11px;">607,20</div>
<div class="a" style="left:909px;width:90px;text-align:right;top:402.56px;font-size:11px;font-weight:400;color:#000;letter-spacing:-0.4px;line-height:11px;">312,89</div>
<div class="a" style="left:213.5px;top:417.56px;font-size:11px;font-weight:400;color:#000;letter-spacing:-0.72px;line-height:11px;">AGOSTO</div>
<div class="a" style="left:261px;width:90px;text-align:right;top:417.56px;font-size:11px;font-weight:400;color:#000;letter-spacing:-0.4px;line-height:11px;">5.000,00</div>
<div class="a" style="left:372px;width:90px;text-align:right;top:417.56px;font-size:11px;font-weight:400;color:#000;letter-spacing:-0.4px;line-height:11px;">0,00</div>
<div class="a" style="left:461px;width:90px;text-align:right;top:417.56px;font-size:11px;font-weight:400;color:#000;letter-spacing:-0.4px;line-height:11px;">509,58</div>
<div class="a" style="left:555px;width:90px;text-align:right;top:417.56px;font-size:11px;font-weight:400;color:#000;letter-spacing:-0.4px;line-height:11px;">0,00</div>
<div class="a" style="left:632px;width:90px;text-align:right;top:417.56px;font-size:11px;font-weight:400;color:#000;letter-spacing:-0.4px;line-height:11px;">0,00</div>
<div class="a" style="left:724px;width:90px;text-align:right;top:417.56px;font-size:11px;font-weight:400;color:#000;letter-spacing:-0.4px;line-height:11px;">0,00</div>
<div class="a" style="left:825px;width:90px;text-align:right;top:417.56px;font-size:11px;font-weight:400;color:#000;letter-spacing:-0.4px;line-height:11px;">607,20</div>
<div class="a" style="left:909px;width:90px;text-align:right;top:417.56px;font-size:11px;font-weight:400;color:#000;letter-spacing:-0.4px;line-height:11px;">312,89</div>
<div class="a" style="left:213.5px;top:432.56px;font-size:11px;font-weight:400;color:#000;letter-spacing:-0.72px;line-height:11px;">SETEMBRO</div>
<div class="a" style="left:261px;width:90px;text-align:right;top:432.56px;font-size:11px;font-weight:400;color:#000;letter-spacing:-0.4px;line-height:11px;">5.000,00</div>
<div class="a" style="left:372px;width:90px;text-align:right;top:432.56px;font-size:11px;font-weight:400;color:#000;letter-spacing:-0.4px;line-height:11px;">0,00</div>
<div class="a" style="left:461px;width:90px;text-align:right;top:432.56px;font-size:11px;font-weight:400;color:#000;letter-spacing:-0.4px;line-height:11px;">509,58</div>
<div class="a" style="left:555px;width:90px;text-align:right;top:432.56px;font-size:11px;font-weight:400;color:#000;letter-spacing:-0.4px;line-height:11px;">0,00</div>
<div class="a" style="left:632px;width:90px;text-align:right;top:432.56px;font-size:11px;font-weight:400;color:#000;letter-spacing:-0.4px;line-height:11px;">0,00</div>
<div class="a" style="left:724px;width:90px;text-align:right;top:432.56px;font-size:11px;font-weight:400;color:#000;letter-spacing:-0.4px;line-height:11px;">0,00</div>
<div class="a" style="left:825px;width:90px;text-align:right;top:432.56px;font-size:11px;font-weight:400;color:#000;letter-spacing:-0.4px;line-height:11px;">607,20</div>
<div class="a" style="left:909px;width:90px;text-align:right;top:432.56px;font-size:11px;font-weight:400;color:#000;letter-spacing:-0.4px;line-height:11px;">312,89</div>
<div class="a" style="left:213.5px;top:447.56px;font-size:11px;font-weight:400;color:#000;letter-spacing:-0.72px;line-height:11px;">OUTUBRO</div>
<div class="a" style="left:261px;width:90px;text-align:right;top:447.56px;font-size:11px;font-weight:400;color:#000;letter-spacing:-0.4px;line-height:11px;">5.000,00</div>
<div class="a" style="left:372px;width:90px;text-align:right;top:447.56px;font-size:11px;font-weight:400;color:#000;letter-spacing:-0.4px;line-height:11px;">0,00</div>
<div class="a" style="left:461px;width:90px;text-align:right;top:447.56px;font-size:11px;font-weight:400;color:#000;letter-spacing:-0.4px;line-height:11px;">509,58</div>
<div class="a" style="left:555px;width:90px;text-align:right;top:447.56px;font-size:11px;font-weight:400;color:#000;letter-spacing:-0.4px;line-height:11px;">0,00</div>
<div class="a" style="left:632px;width:90px;text-align:right;top:447.56px;font-size:11px;font-weight:400;color:#000;letter-spacing:-0.4px;line-height:11px;">0,00</div>
<div class="a" style="left:724px;width:90px;text-align:right;top:447.56px;font-size:11px;font-weight:400;color:#000;letter-spacing:-0.4px;line-height:11px;">0,00</div>
<div class="a" style="left:825px;width:90px;text-align:right;top:447.56px;font-size:11px;font-weight:400;color:#000;letter-spacing:-0.4px;line-height:11px;">607,20</div>
<div class="a" style="left:909px;width:90px;text-align:right;top:447.56px;font-size:11px;font-weight:400;color:#000;letter-spacing:-0.4px;line-height:11px;">312,89</div>
<div class="a" style="left:213.5px;top:462.56px;font-size:11px;font-weight:400;color:#000;letter-spacing:-0.72px;line-height:11px;">NOVEMBRO</div>
<div class="a" style="left:261px;width:90px;text-align:right;top:462.56px;font-size:11px;font-weight:400;color:#000;letter-spacing:-0.4px;line-height:11px;">5.000,00</div>
<div class="a" style="left:372px;width:90px;text-align:right;top:462.56px;font-size:11px;font-weight:400;color:#000;letter-spacing:-0.4px;line-height:11px;">0,00</div>
<div class="a" style="left:461px;width:90px;text-align:right;top:462.56px;font-size:11px;font-weight:400;color:#000;letter-spacing:-0.4px;line-height:11px;">509,58</div>
<div class="a" style="left:555px;width:90px;text-align:right;top:462.56px;font-size:11px;font-weight:400;color:#000;letter-spacing:-0.4px;line-height:11px;">0,00</div>
<div class="a" style="left:632px;width:90px;text-align:right;top:462.56px;font-size:11px;font-weight:400;color:#000;letter-spacing:-0.4px;line-height:11px;">0,00</div>
<div class="a" style="left:724px;width:90px;text-align:right;top:462.56px;font-size:11px;font-weight:400;color:#000;letter-spacing:-0.4px;line-height:11px;">0,00</div>
<div class="a" style="left:825px;width:90px;text-align:right;top:462.56px;font-size:11px;font-weight:400;color:#000;letter-spacing:-0.4px;line-height:11px;">607,20</div>
<div class="a" style="left:909px;width:90px;text-align:right;top:462.56px;font-size:11px;font-weight:400;color:#000;letter-spacing:-0.4px;line-height:11px;">312,89</div>
<div class="a" style="left:211px;top:474px;width:790px;height:15px;background:#0078d7;"></div>
<div class="a" style="left:273px;top:474px;width:1px;height:15px;background:#5ba3e3;"></div>
<div class="a" style="left:353px;top:474px;width:1px;height:15px;background:#5ba3e3;"></div>
<div class="a" style="left:464px;top:474px;width:1px;height:15px;background:#5ba3e3;"></div>
<div class="a" style="left:553px;top:474px;width:1px;height:15px;background:#5ba3e3;"></div>
<div class="a" style="left:647px;top:474px;width:1px;height:15px;background:#5ba3e3;"></div>
<div class="a" style="left:724px;top:474px;width:1px;height:15px;background:#5ba3e3;"></div>
<div class="a" style="left:816px;top:474px;width:1px;height:15px;background:#5ba3e3;"></div>
<div class="a" style="left:917px;top:474px;width:1px;height:15px;background:#5ba3e3;"></div>
<div class="a" style="left:213.5px;top:477.56px;font-size:11px;font-weight:400;color:#fff;letter-spacing:-0.72px;line-height:11px;">DEZEMBRO</div>
<div class="a" style="left:261px;width:90px;text-align:right;top:477.56px;font-size:11px;font-weight:400;color:#fff;letter-spacing:-0.4px;line-height:11px;">5.000,00</div>
<div class="a" style="left:372px;width:90px;text-align:right;top:477.56px;font-size:11px;font-weight:400;color:#fff;letter-spacing:-0.4px;line-height:11px;">0,00</div>
<div class="a" style="left:461px;width:90px;text-align:right;top:477.56px;font-size:11px;font-weight:400;color:#fff;letter-spacing:-0.4px;line-height:11px;">509,58</div>
<div class="a" style="left:555px;width:90px;text-align:right;top:477.56px;font-size:11px;font-weight:400;color:#fff;letter-spacing:-0.4px;line-height:11px;">0,00</div>
<div class="a" style="left:632px;width:90px;text-align:right;top:477.56px;font-size:11px;font-weight:400;color:#fff;letter-spacing:-0.4px;line-height:11px;">0,00</div>
<div class="a" style="left:724px;width:90px;text-align:right;top:477.56px;font-size:11px;font-weight:400;color:#fff;letter-spacing:-0.4px;line-height:11px;">0,00</div>
<div class="a" style="left:825px;width:90px;text-align:right;top:477.56px;font-size:11px;font-weight:400;color:#fff;letter-spacing:-0.4px;line-height:11px;">607,20</div>
<div class="a" style="left:909px;width:90px;text-align:right;top:477.56px;font-size:11px;font-weight:400;color:#fff;letter-spacing:-0.4px;line-height:11px;">312,89</div>
<svg class="a" style="left:202px;top:476px" width="7" height="10"><path d="M0.5 0 L6.5 5 L0.5 10 Z" fill="#000"/></svg>
<div class="a" style="left:199px;top:491px;width:819px;height:15px;background:#f0f0f0;border-bottom:1px solid #a8a8a8;box-sizing:border-box;"></div>
<div class="a" style="left:273px;top:491px;width:1px;height:15px;background:#c8c8c8;"></div>
<div class="a" style="left:353px;top:491px;width:1px;height:15px;background:#c8c8c8;"></div>
<div class="a" style="left:464px;top:491px;width:1px;height:15px;background:#c8c8c8;"></div>
<div class="a" style="left:553px;top:491px;width:1px;height:15px;background:#c8c8c8;"></div>
<div class="a" style="left:647px;top:491px;width:1px;height:15px;background:#c8c8c8;"></div>
<div class="a" style="left:724px;top:491px;width:1px;height:15px;background:#c8c8c8;"></div>
<div class="a" style="left:816px;top:491px;width:1px;height:15px;background:#c8c8c8;"></div>
<div class="a" style="left:917px;top:491px;width:1px;height:15px;background:#c8c8c8;"></div>
<div class="a" style="left:1001px;top:491px;width:1px;height:15px;background:#c8c8c8;"></div>
<div class="a" style="left:199px;top:491px;width:1px;height:15px;background:#c8c8c8;"></div>
<div class="a" style="left:1017px;top:491px;width:1px;height:15px;background:#c8c8c8;"></div>
<div class="a" style="left:189px;width:80px;text-align:right;top:494.36px;font-size:11px;font-weight:700;color:#000;letter-spacing:0px;line-height:11px;">Totais</div>
<div class="a" style="left:261px;width:90px;text-align:right;top:494.36px;font-size:11px;font-weight:400;color:#000;letter-spacing:-0.4px;line-height:11px;">60.000,00</div>
<div class="a" style="left:372px;width:90px;text-align:right;top:494.36px;font-size:11px;font-weight:400;color:#000;letter-spacing:-0.4px;line-height:11px;">0,00</div>
<div class="a" style="left:461px;width:90px;text-align:right;top:494.36px;font-size:11px;font-weight:400;color:#000;letter-spacing:-0.4px;line-height:11px;">6.114,96</div>
<div class="a" style="left:555px;width:90px;text-align:right;top:494.36px;font-size:11px;font-weight:400;color:#000;letter-spacing:-0.4px;line-height:11px;">0,00</div>
<div class="a" style="left:632px;width:90px;text-align:right;top:494.36px;font-size:11px;font-weight:400;color:#000;letter-spacing:-0.4px;line-height:11px;">0,00</div>
<div class="a" style="left:724px;width:90px;text-align:right;top:494.36px;font-size:11px;font-weight:400;color:#000;letter-spacing:-0.4px;line-height:11px;">0,00</div>
<div class="a" style="left:825px;width:90px;text-align:right;top:494.36px;font-size:11px;font-weight:400;color:#000;letter-spacing:-0.4px;line-height:11px;">7.116,80</div>
<div class="a" style="left:909px;width:90px;text-align:right;top:494.36px;font-size:11px;font-weight:400;color:#000;letter-spacing:-0.4px;line-height:11px;">3.843,72</div>
<div class="a" style="left:199px;top:506px;width:819px;height:14px;background:#f0f0f0;border-bottom:1px solid #a8a8a8;box-sizing:border-box;"></div>
<div class="a" style="left:273px;top:506px;width:1px;height:14px;background:#c8c8c8;"></div>
<div class="a" style="left:353px;top:506px;width:1px;height:14px;background:#c8c8c8;"></div>
<div class="a" style="left:464px;top:506px;width:1px;height:14px;background:#c8c8c8;"></div>
<div class="a" style="left:553px;top:506px;width:1px;height:14px;background:#c8c8c8;"></div>
<div class="a" style="left:647px;top:506px;width:1px;height:14px;background:#c8c8c8;"></div>
<div class="a" style="left:724px;top:506px;width:1px;height:14px;background:#c8c8c8;"></div>
<div class="a" style="left:816px;top:506px;width:1px;height:14px;background:#c8c8c8;"></div>
<div class="a" style="left:917px;top:506px;width:1px;height:14px;background:#c8c8c8;"></div>
<div class="a" style="left:1001px;top:506px;width:1px;height:14px;background:#c8c8c8;"></div>
<div class="a" style="left:199px;top:506px;width:1px;height:14px;background:#c8c8c8;"></div>
<div class="a" style="left:1017px;top:506px;width:1px;height:14px;background:#c8c8c8;"></div>
<div class="a" style="left:189px;width:80px;text-align:right;top:508.36px;font-size:11px;font-weight:700;color:#000;letter-spacing:0px;line-height:11px;">13ª Salário</div>
<div class="a" style="left:261px;width:90px;text-align:right;top:508.36px;font-size:11px;font-weight:400;color:#000;letter-spacing:-0.4px;line-height:11px;">5.000,00</div>
<div class="a" style="left:372px;width:90px;text-align:right;top:508.36px;font-size:11px;font-weight:400;color:#000;letter-spacing:-0.4px;line-height:11px;">0,00</div>
<div class="a" style="left:461px;width:90px;text-align:right;top:508.36px;font-size:11px;font-weight:400;color:#000;letter-spacing:-0.4px;line-height:11px;">509,58</div>
<div class="a" style="left:555px;width:90px;text-align:right;top:508.36px;font-size:11px;font-weight:400;color:#000;letter-spacing:-0.4px;line-height:11px;">0,00</div>
<div class="a" style="left:632px;width:90px;text-align:right;top:508.36px;font-size:11px;font-weight:400;color:#000;letter-spacing:-0.4px;line-height:11px;">0,00</div>
<div class="a" style="left:724px;width:90px;text-align:right;top:508.36px;font-size:11px;font-weight:400;color:#000;letter-spacing:-0.4px;line-height:11px;">0,00</div>
<div class="a" style="left:825px;width:90px;text-align:right;top:508.36px;font-size:11px;font-weight:400;color:#000;letter-spacing:-0.4px;line-height:11px;">607,20</div>
<div class="a" style="left:909px;width:90px;text-align:right;top:508.36px;font-size:11px;font-weight:400;color:#000;letter-spacing:-0.4px;line-height:11px;">312,89</div>
<div class="a" style="left:410px;top:523px;width:146px;height:20px;background:#fdfdfd;border:1px solid #d2d2d2;border-radius:3px;box-sizing:border-box;"></div>
<div class="a" style="left:559px;top:523px;width:147px;height:20px;background:#fdfdfd;border:1px solid #d2d2d2;border-radius:3px;box-sizing:border-box;"></div>
<svg class="a" style="left:420px;top:525px" width="16" height="16" viewBox="0 0 16 16"><defs><linearGradient id="pd" x1="0" y1="0" x2="1" y2="1"><stop offset="0" stop-color="#d8f0ff"/><stop offset="1" stop-color="#ffffff"/></linearGradient></defs><path d="M0.5 0.5 H8 L11.5 4 V14.5 H0.5 Z" fill="url(#pd)" stroke="#78a8b0" stroke-width="1"/><path d="M0.5 0.5 V14.5" stroke="#b0a8e8" stroke-width="1"/><path d="M3 13 L4 10 L12 2 L14 4 L6 12 Z" fill="#2f6cc8" stroke="#1c3f90" stroke-width="0.7"/><path d="M3 13 L4 10 L6 12 Z" fill="#d8c070"/><circle cx="13.2" cy="2.6" r="2.2" fill="#e83838"/></svg>
<svg class="a" style="left:573px;top:525px" width="16" height="16" viewBox="0 0 16 16"><defs><linearGradient id="pd" x1="0" y1="0" x2="1" y2="1"><stop offset="0" stop-color="#d8f0ff"/><stop offset="1" stop-color="#ffffff"/></linearGradient></defs><path d="M0.5 0.5 H8 L11.5 4 V14.5 H0.5 Z" fill="url(#pd)" stroke="#78a8b0" stroke-width="1"/><path d="M0.5 0.5 V14.5" stroke="#b0a8e8" stroke-width="1"/><path d="M3 13 L4 10 L12 2 L14 4 L6 12 Z" fill="#2f6cc8" stroke="#1c3f90" stroke-width="0.7"/><path d="M3 13 L4 10 L6 12 Z" fill="#d8c070"/><circle cx="13.2" cy="2.6" r="2.2" fill="#e83838"/></svg>
<div class="a" style="left:439px;top:527.86px;font-size:11px;font-weight:700;color:#000;letter-spacing:0px;line-height:11px;"><u>A</u>lterar Competência</div>
<div class="a" style="left:593.5px;top:527.86px;font-size:11px;font-weight:700;color:#000;letter-spacing:0px;line-height:11px;">Alterar 13ª <u>S</u>alário</div>
<div class="a" style="left:192px;top:550px;width:832px;height:2px;background:#8c8c8c;"></div>
<div class="a" style="left:195px;top:555px;width:827px;height:33px;border:1px solid #b8b8b8;border-right-color:#fff;border-bottom-color:#fff;box-sizing:border-box;"></div>
<div class="a" style="left:190px;top:552px;width:2px;height:40px;background:linear-gradient(to bottom,#9aa4b0,#3a4a60 70%,#0a1a30);"></div>
<div class="a" style="left:192px;top:588px;width:832px;height:2px;background:#fafafa;"></div>
<div class="a" style="left:192px;top:590px;width:832px;height:1px;background:#b8b8b8;"></div>
<div class="a" style="left:192px;top:591px;width:832px;height:1px;background:#909090;"></div>
<div class="a" style="left:200px;top:560px;width:119px;height:23px;background:#fdfdfd;border:1px solid #d2d2d2;border-radius:3px;box-sizing:border-box;"></div>
<div class="a" style="left:509px;top:560px;width:90px;height:23px;background:#fdfdfd;border:1px solid #d2d2d2;border-radius:3px;box-sizing:border-box;"></div>
<div class="a" style="left:601px;top:560px;width:91px;height:23px;background:#fdfdfd;border:1px solid #d2d2d2;border-radius:3px;box-sizing:border-box;"></div>
<div class="a" style="left:960px;top:561px;width:28px;height:22px;background:#f7f7f7;border-radius:3px;"></div>
<div class="a" style="left:990px;top:560px;width:27px;height:24px;background:#fdfdfd;border:1px solid #d8d8d8;border-radius:3px;box-sizing:border-box;"></div>
<svg class="a" style="left:209px;top:564px" width="23" height="15" viewBox="0 0 23 15"><path d="M8.5 4.5 Q8.5 2.5 10 2.5 V12 H21 V13.5 H8.5 Z" fill="#f0c850" stroke="#b08020" stroke-width="1"/><rect x="11.5" y="0.5" width="10" height="10" fill="#dcefff" stroke="#6a90d0" stroke-width="1"/><path d="M13 3.5 H20 M13 6 H20 M13 8.5 H20" stroke="#b8d8f0" stroke-width="1"/><rect x="9.5" y="9.5" width="13" height="4.5" fill="#f0d060" stroke="#b08020" stroke-width="1"/><circle cx="4.5" cy="7.5" r="4" fill="#2a9a2a" stroke="#0a6a0a" stroke-width="0.8"/><path d="M4.5 5 V10 M2 7.5 H7" stroke="#fff" stroke-width="1.6"/></svg>
<svg class="a" style="left:519px;top:564px" width="15" height="15" viewBox="0 0 15 15"><defs><linearGradient id="cy" x1="0" y1="0" x2="0" y2="1"><stop offset="0" stop-color="#fff0a0"/><stop offset="1" stop-color="#e8c048"/></linearGradient></defs><path d="M0.5 6 Q0.5 3.5 3 3.5 V10 H14 V13.5 H0.5 Z" fill="url(#cy)" stroke="#c09020" stroke-width="1"/><rect x="3" y="8" width="11" height="6" fill="url(#cy)" stroke="#c09020" stroke-width="1"/><rect x="5" y="2.5" width="6.5" height="6.5" fill="#fff" stroke="#2040c0" stroke-width="1.2"/><path d="M6.2 5.5 L8.2 7.5 L13.5 0.8" stroke="#f03818" stroke-width="1.5" fill="none"/></svg>
<svg class="a" style="left:614px;top:565px" width="15" height="15" viewBox="0 0 15 15"><path d="M3.5 0.5 H10 L14.5 5 V14.5 H3.5 Z" fill="#d8f0ff" stroke="#78a8c0" stroke-width="1"/><path d="M10 0.5 V5 H14.5" fill="#eaf6ff" stroke="#78a8c0" stroke-width="0.8"/><path d="M1 6.5 L3 5 L6.5 8 L10 5 L12 6.5 L8.5 9.5 L11.5 13 L9.5 14.5 L6.5 11 L3 14.5 L1 13 L4.5 9.5 Z" fill="#e02020" stroke="#b01010" stroke-width="0.6"/></svg>
<svg class="a" style="left:968px;top:565px" width="13" height="15" viewBox="0 0 13 15"><path d="M0.5 0.5 H8 L12 4.5 V14.5 H0.5 Z" fill="#c4c4c4" stroke="#b0b0b0" stroke-width="1"/></svg>
<svg class="a" style="left:997px;top:566px" width="14" height="13" viewBox="0 0 14 13"><defs><linearGradient id="ga" x1="0" y1="0" x2="0" y2="1"><stop offset="0" stop-color="#4cc04c"/><stop offset="1" stop-color="#0a900a"/></linearGradient></defs><rect x="0" y="0" width="14" height="13" rx="1.5" fill="url(#ga)"/><path d="M2.5 6.5 H10.5 M7 3 L10.5 6.5 L7 10" stroke="#fff" stroke-width="2" fill="none"/></svg>
<div class="a" style="left:237px;top:567.36px;font-size:11px;font-weight:700;color:#000;letter-spacing:0px;line-height:11px;">Detal<u>h</u>amento</div>
<div class="a" style="left:538px;top:567.36px;font-size:11px;font-weight:700;color:#000;letter-spacing:0px;line-height:11px;"><u>C</u>onfirmar</div>
<div class="a" style="left:633px;top:567.36px;font-size:11px;font-weight:700;color:#000;letter-spacing:0px;line-height:11px;">Ca<u>n</u>celar</div>
</body></html>
